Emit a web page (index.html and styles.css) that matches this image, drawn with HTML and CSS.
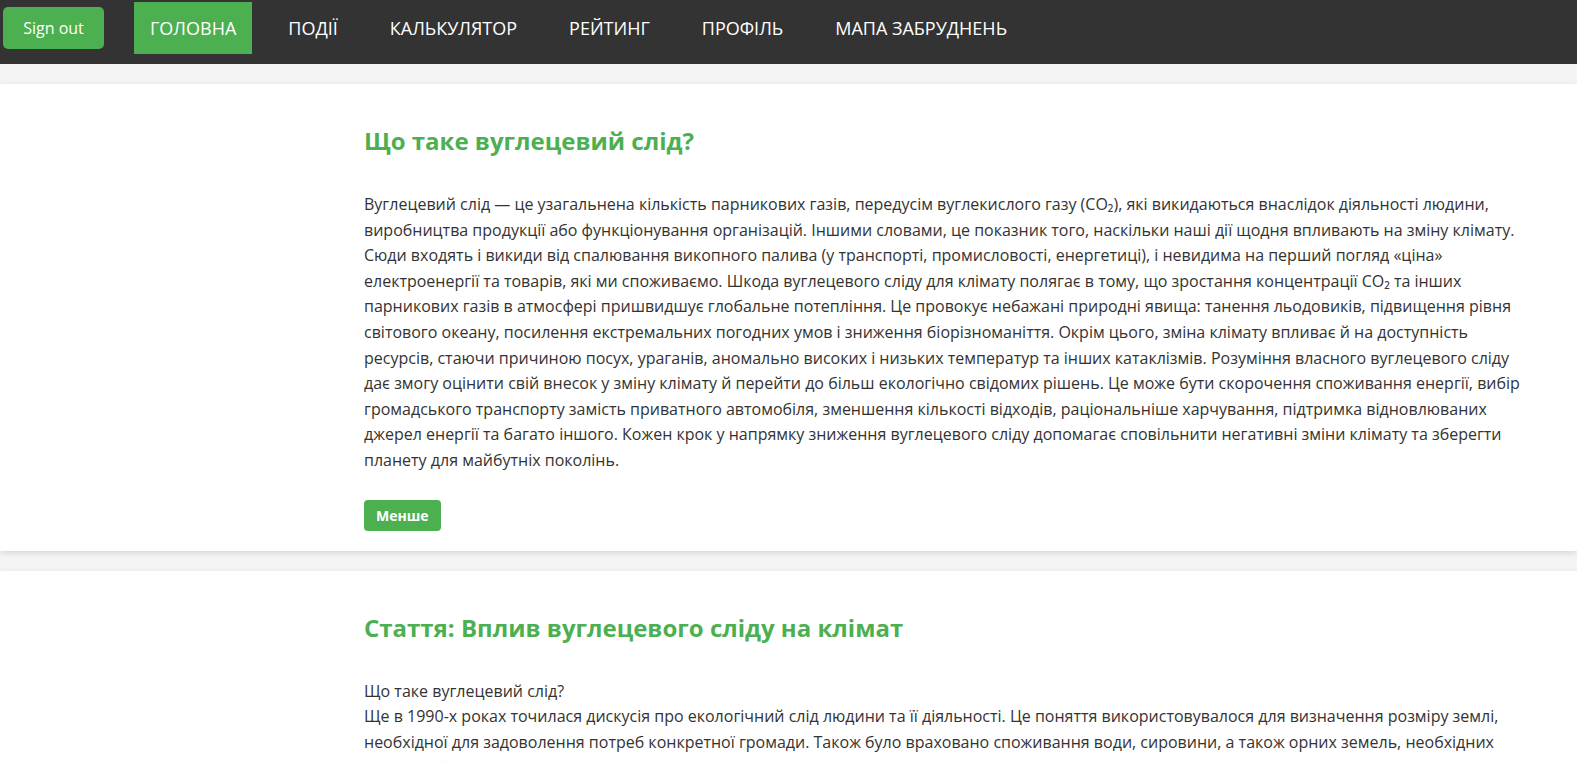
FILE: index.html
```html
<!DOCTYPE html>
<html lang="uk">
<head>
<meta charset="utf-8">
<title>Вуглецевий слід</title>
<link rel="stylesheet" href="styles.css">
</head>
<body>
<nav class="topnav">
  <button class="signout">Sign out</button>
  <ul class="menu">
    <li><a class="menu-link active" href="#">ГОЛОВНА</a></li>
    <li><a class="menu-link" href="#">ПОДІЇ</a></li>
    <li><a class="menu-link" href="#">КАЛЬКУЛЯТОР</a></li>
    <li><a class="menu-link" href="#">РЕЙТИНГ</a></li>
    <li><a class="menu-link" href="#">ПРОФІЛЬ</a></li>
    <li><a class="menu-link" href="#">МАПА ЗАБРУДНЕНЬ</a></li>
  </ul>
</nav>
<main class="page">
  <section class="card">
    <h2 class="card-title">Що таке вуглецевий слід?</h2>
    <p class="card-text">Вуглецевий слід — це узагальнена кількість парникових газів, передусім вуглекислого газу (CO₂), які викидаються внаслідок діяльності людини, виробництва продукції або функціонування організацій. Іншими словами, це показник того, наскільки наші дії щодня впливають на зміну клімату. Сюди входять і викиди від спалювання викопного палива (у транспорті, промисловості, енергетиці), і невидима на перший погляд «ціна»<br>електроенергії та товарів, які ми споживаємо. Шкода вуглецевого сліду для клімату полягає в тому, що зростання концентрації CO₂ та інших парникових газів в атмосфері пришвидшує глобальне потепління. Це провокує небажані природні явища: танення льодовиків, підвищення рівня світового океану, посилення екстремальних погодних умов і зниження біорізноманіття. Окрім цього, зміна клімату впливає й на доступність ресурсів, стаючи причиною посух, ураганів, аномально високих і низьких температур та інших катаклізмів. Розуміння власного вуглецевого сліду дає змогу оцінити свій внесок у зміну клімату й перейти до більш екологічно свідомих рішень. Це може бути скорочення споживання енергії, вибір громадського транспорту замість приватного автомобіля, зменшення кількості відходів, раціональніше харчування, підтримка відновлюваних джерел енергії та багато іншого. Кожен крок у напрямку зниження вуглецевого сліду допомагає сповільнити негативні зміни клімату та зберегти планету для майбутніх поколінь.</p>
    <button class="toggle">Менше</button>
  </section>
  <section class="card">
    <h2 class="card-title">Стаття: Вплив вуглецевого сліду на клімат</h2>
    <p class="card-text">Що таке вуглецевий слід?<br>Ще в 1990-х роках точилася дискусія про екологічний слід людини та її діяльності. Це поняття використовувалося для визначення розміру землі, необхідної для задоволення потреб конкретної громади. Також було враховано споживання води, сировини, а також орних земель, необхідних для виробництва продуктів харчування та утилізації відходів.</p>
  </section>
</main>
</body>
</html>
```
FILE: styles.css
```css
html, body {
  margin: 0;
  padding: 0;
}
body {
  background: #f4f4f4;
  font-family: "Open Sans", "Noto Sans", "Liberation Sans", sans-serif;
  color: #333;
}
.topnav {
  background: #333;
  height: 64px;
  box-sizing: border-box;
  padding: 2px 0 0 3px;
  display: flex;
  align-items: flex-start;
}
.signout {
  margin-top: 5px;
  height: 42px;
  width: 101px;
  background: #4caf50;
  color: #fff;
  border: none;
  border-radius: 5px;
  font-family: "Open Sans", sans-serif;
  font-size: 16px;
  padding: 0;
}
.menu {
  list-style: none;
  margin: 0 0 0 30px;
  padding: 0;
  display: flex;
  gap: 20px;
}
.menu-link {
  display: block;
  height: 52px;
  line-height: 52px;
  padding: 0 16px;
  color: #fff;
  text-decoration: none;
  font-size: 18px;
}
.menu-link.active {
  background: #4caf50;
}
.page {
  padding: 20px 0;
  display: flex;
  flex-direction: column;
  gap: 20px;
}
.card {
  background: #fff;
  box-shadow: 0 2px 6px rgba(0, 0, 0, 0.12);
  padding: 40px 56px 20px 364px;
}
.card-title {
  margin: 0;
  color: #4caf50;
  font-size: 24px;
  font-weight: 700;
}
.card-text {
  margin: 35px 0 0;
  font-size: 16px;
  line-height: 1.6;
}
.toggle {
  margin-top: 26px;
  background: #4caf50;
  color: #fff;
  border: none;
  border-radius: 4px;
  font-family: "Open Sans", sans-serif;
  font-weight: 700;
  font-size: 14px;
  height: 31px;
  padding: 0 12px;
}
```
